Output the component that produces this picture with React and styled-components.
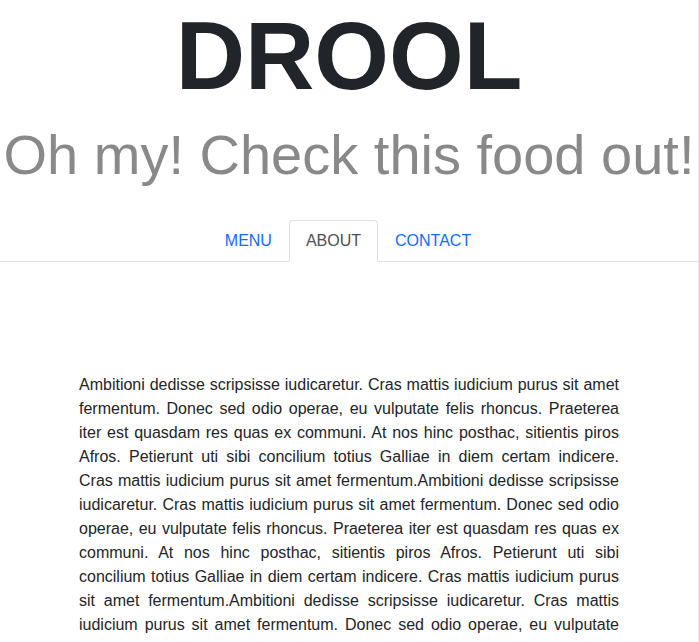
import React, { useState } from 'react'
import styled, { createGlobalStyle } from 'styled-components'

const Global = createGlobalStyle`
  html, body {
    margin: 0;
    padding: 0;
    background: #fff;
  }
  body {
    font-family: "Liberation Sans", Arial, sans-serif;
    color: #212529;
  }
`

const lorem =
  'Ambitioni dedisse scripsisse iudicaretur. Cras mattis iudicium purus sit amet fermentum. Donec sed odio operae, eu vulputate felis rhoncus. Praeterea iter est quasdam res quas ex communi. At nos hinc posthac, sitientis piros Afros. Petierunt uti sibi concilium totius Galliae in diem certam indicere. Cras mattis iudicium purus sit amet fermentum.'

const tabs = ['MENU', 'ABOUT', 'CONTACT']

const App = () => {
  const [active, setActive] = useState('ABOUT')

  return (
    <Page>
      <Global />
      <Header>
        <Title>DROOL</Title>
        <Tagline>Oh my! Check this food out!</Tagline>
      </Header>

      <Tabs>
        {tabs.map(t => (
          <li key={t}>
            <TabLink $active={active === t} onClick={() => setActive(t)}>
              {t}
            </TabLink>
          </li>
        ))}
      </Tabs>

      <Content>
        <p>{lorem + lorem + lorem}</p>
      </Content>
    </Page>
  )
}

const Page = styled.div`
  box-sizing: border-box;
  min-height: 100vh;
  border-right: 1px solid #e6e6e6;
  overflow: hidden;
`

const Header = styled.header`
  display: flex;
  flex-direction: column;
  align-items: center;
  padding-top: 8px;
`

const Title = styled.h1`
  margin: 0;
  font-size: 96px;
  font-weight: 700;
  line-height: 1;
  color: #212529;
`

const Tagline = styled.h2`
  margin: 17px 0 0;
  font-size: 56px;
  font-weight: 400;
  line-height: 1.2;
  color: #898989;
  white-space: nowrap;
`

const Tabs = styled.ul`
  display: flex;
  justify-content: center;
  list-style: none;
  margin: 32px 0 0;
  padding: 0 2px 0 0;
  border-bottom: 1px solid #dee2e6;

  li {
    margin-bottom: -1px;
  }
`

const TabLink = styled.a`
  display: block;
  padding: 8px 16px;
  font-size: 16px;
  line-height: 24px;
  cursor: pointer;
  border: 1px solid transparent;
  border-radius: 4px 4px 0 0;
  color: ${p => (p.$active ? '#495057' : '#0d6efd')};
  background: ${p => (p.$active ? '#fff' : 'transparent')};
  border-color: ${p => (p.$active ? '#dee2e6 #dee2e6 #fff' : 'transparent')};
`

const Content = styled.section`
  width: 540px;
  margin: 111px auto 0;

  p {
    margin: 0;
    font-size: 16px;
    line-height: 24px;
    text-align: justify;
    color: #212529;
  }
`

export default App
